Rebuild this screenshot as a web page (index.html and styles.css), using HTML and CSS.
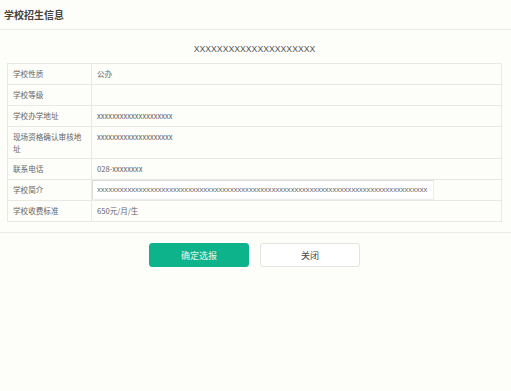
FILE: index.html
```html
<!DOCTYPE html>
<html lang="zh">
<head>
<meta charset="utf-8">
<title>学校招生信息</title>
<link rel="stylesheet" href="styles.css">
</head>
<body>
<div class="page">
  <header class="head">
    <h1 class="head-title">学校招生信息</h1>
  </header>
  <section class="content">
    <h2 class="school-name">XXXXXXXXXXXXXXXXXXXXX</h2>
    <table class="info">
      <tr><td class="lbl">学校性质</td><td class="val">公办</td></tr>
      <tr><td class="lbl">学校等级</td><td class="val"></td></tr>
      <tr><td class="lbl">学校办学地址</td><td class="val">xxxxxxxxxxxxxxxxxxxx</td></tr>
      <tr><td class="lbl lbl-two">现场资格确认审核地址</td><td class="val val-top">xxxxxxxxxxxxxxxxxxxx</td></tr>
      <tr><td class="lbl">联系电话</td><td class="val">028-xxxxxxxx</td></tr>
      <tr><td class="lbl">学校简介</td><td class="val val-box"><div class="intro">xxxxxxxxxxxxxxxxxxxxxxxxxxxxxxxxxxxxxxxxxxxxxxxxxxxxxxxxxxxxxxxxxxxxxxxxxxxxxxxxxxxxxxx</div></td></tr>
      <tr><td class="lbl">学校收费标准</td><td class="val">650元/月/生</td></tr>
    </table>
  </section>
  <footer class="actions">
    <button class="btn btn-primary" type="button">确定选报</button>
    <button class="btn btn-default" type="button">关闭</button>
  </footer>
</div>
</body>
</html>
```
FILE: styles.css
```css
html, body {
  margin: 0;
  padding: 0;
  background: #fdfdf9;
}
body {
  font-family: "Noto Sans CJK SC", "Liberation Sans", sans-serif;
  color: #555;
  width: 511px;
  height: 391px;
  overflow: hidden;
}
.head {
  height: 29px;
  border-bottom: 1px solid #ebebe8;
  display: flex;
  align-items: center;
  padding-left: 4px;
}
.head-title {
  margin: 0;
  font-size: 10px;
  font-weight: bold;
  color: #444;
}
.content {
  padding: 0 9px 10px 7px;
  border-bottom: 1px solid #ebebe8;
}
.school-name {
  margin: 0;
  padding-top: 13px;
  height: 20px;
  box-sizing: content-box;
  font-family: "Liberation Sans", sans-serif;
  font-size: 8.7px;
  font-weight: normal;
  color: #555;
  text-align: center;
  line-height: 12px;
}
.info {
  width: 100%;
  border-collapse: collapse;
  font-size: 7.6px;
  line-height: 12px;
  border: 1px solid #e8e8e4;
}
.info td {
  border: 1px solid #e8e8e4;
  padding: 4px 5px;
  height: 12px;
  vertical-align: middle;
  color: #666;
}
.lbl {
  width: 73px;
}
.lbl-two {
  line-height: 11.5px;
}
.val-top {
  vertical-align: top !important;
}
.val-box {
  padding: 0 !important;
}
.intro {
  width: 330px;
  height: 18px;
  line-height: 18px;
  padding-left: 4px;
  padding-right: 6px;
  border-top: 1px solid #dcdcd8;
  border-left: 1px solid #dcdcd8;
  border-right: 1px solid #ededea;
  border-bottom: 1px solid #ededea;
  overflow: hidden;
  white-space: nowrap;
  font-family: "Liberation Sans", sans-serif;
  font-size: 7.6px;
  color: #666;
  background: #fff;
}
.actions {
  display: flex;
  justify-content: center;
  gap: 11px;
  padding-top: 10px;
  padding-right: 2px;
}
.btn {
  width: 100px;
  height: 24px;
  border-radius: 3px;
  font-family: "Noto Sans CJK SC", sans-serif;
  font-size: 9px;
  cursor: pointer;
  padding: 0;
}
.btn-primary {
  background: #0db38a;
  border: 1px solid #0db38a;
  color: #e8f6f1;
}
.btn-default {
  background: #fff;
  border: 1px solid #e3e3e0;
  color: #444;
}
```
